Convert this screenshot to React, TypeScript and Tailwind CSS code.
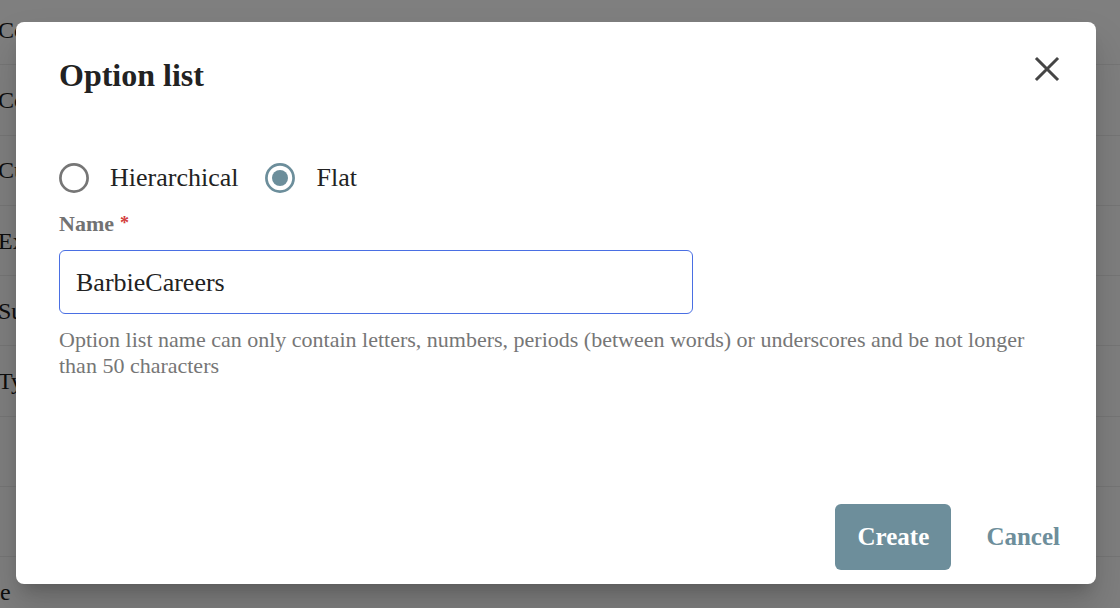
import React from "react";

const rows = ["Code", "Column", "Custom", "Export", "Summary", "Type", "", "", "e"];

function Radio({ checked }: { checked: boolean }) {
  return (
    <svg width="30" height="30" viewBox="0 0 30 30" className="shrink-0">
      <circle
        cx="15"
        cy="15"
        r="13.6"
        fill="none"
        stroke={checked ? "#6c8e9b" : "#767676"}
        strokeWidth="2.7"
      />
      {checked && <circle cx="15" cy="15" r="8" fill="#6c8e9b" />}
    </svg>
  );
}

export default function App() {
  return (
    <div className="relative h-[608px] w-[1120px] overflow-hidden bg-white font-['Liberation_Serif',serif]">
      {/* background table */}
      <div className="-mt-[5px] flex flex-col">
        {rows.map((r, i) => (
          <div
            key={i}
            className="flex h-[70.3px] shrink-0 items-center border-b border-[#ececec] text-[24px] text-[#1b1b1b]"
          >
            <span className={r === "e" ? "ml-0" : "-ml-[2px]"}>{r}</span>
          </div>
        ))}
      </div>

      {/* overlay */}
      <div className="absolute inset-0 bg-black/50" />

      {/* dialog */}
      <div className="absolute left-4 top-[22px] flex h-[562px] w-[1080px] flex-col rounded-[8px] bg-white pl-[43px] pr-[36px] pt-[33px] pb-[14px] shadow-[0_11px_15px_-7px_rgba(0,0,0,0.2),0_24px_38px_3px_rgba(0,0,0,0.14)]">
        <div className="flex items-start justify-between">
          <h2 className="text-[32px] font-bold leading-[40px] text-[#222]">Option list</h2>
          <svg width="26" height="26" viewBox="0 0 26 26" className="mt-[1px]">
            <path d="M3 3 L23 23 M23 3 L3 23" stroke="#454545" strokeWidth="3" strokeLinecap="square" />
          </svg>
        </div>

        <div className="mt-[68px] flex h-[30px] items-center">
          <Radio checked={false} />
          <span className="ml-[21px] text-[26px] leading-[30px] text-[#222]">Hierarchical</span>
          <span className="ml-[27px]">
            <Radio checked={true} />
          </span>
          <span className="ml-[21px] text-[26px] leading-[30px] text-[#222]">Flat</span>
        </div>

        <div className="mt-[18px] flex items-start text-[22px] font-bold leading-[26px] text-[#727272]">
          <span>Name</span>
          <span className="ml-[6px] mt-[3px] text-[18px] leading-[18px] text-[#d33c3c]">*</span>
        </div>

        <div className="mt-[13px] flex h-[64px] w-[634px] items-center rounded-[6px] border border-[#4a6fe3] pl-4 text-[26px] text-[#222]">
          BarbieCareers
        </div>

        <p className="mt-[13px] text-[22px] leading-[26px] text-[#767676]">
          Option list name can only contain letters, numbers, periods (between words) or underscores and be not longer than 50 characters
        </p>

        <div className="mt-auto flex items-center justify-end">
          <div className="flex h-[66px] w-[116px] items-center justify-center rounded-[6px] bg-[#6d8e9b] text-[25px] font-bold text-white">
            Create
          </div>
          <div className="ml-[35px] text-[25px] font-bold text-[#6d8e9b]">Cancel</div>
        </div>
      </div>
    </div>
  );
}
